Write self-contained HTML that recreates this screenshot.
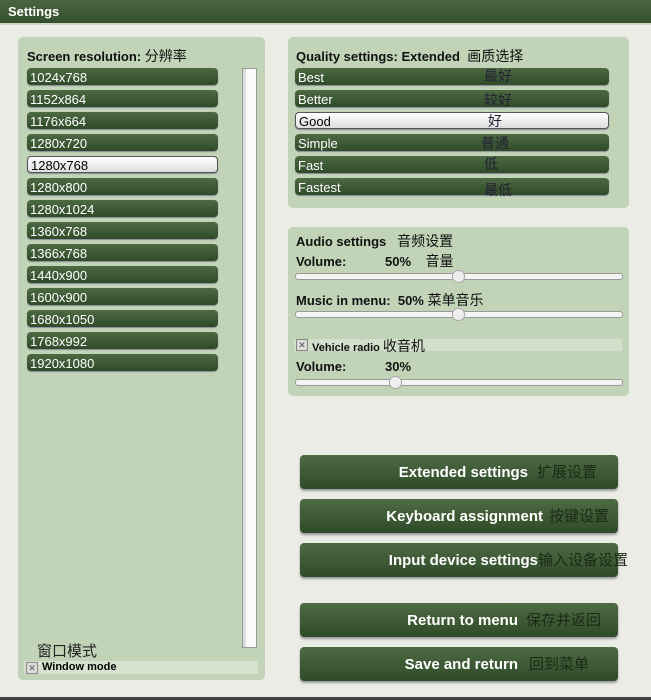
<!DOCTYPE html><html><head><style>
body{margin:0;width:651px;height:700px;overflow:hidden;background:#ecece6;font-family:"Liberation Sans","Noto Sans CJK SC",sans-serif;position:relative}
.a{position:absolute}
.title{left:0;top:0;width:651px;height:23px;background:linear-gradient(#4a6440,#34502c);color:#fff;font-weight:bold;font-size:13px;line-height:23px;text-indent:8px;border-bottom:2px solid #cfd6c8}
.panel{background:#c2d4b8;border-radius:5px}
.it{position:absolute;height:17px;border-radius:4px;background:linear-gradient(#4d6a43,#2f4a28);color:#fff;font-size:13px;line-height:19px;padding-left:3px;box-sizing:border-box;box-shadow:0 1px 1px #889}
.sel{background:linear-gradient(#fff,#ddd);color:#000;border:1px solid #555;line-height:17px}
.h{font-weight:bold;font-size:13px;color:#111;white-space:nowrap}
.cj{font-size:14px;color:#111;font-weight:normal}
.cn{position:absolute;font-size:14px;color:#223;line-height:16px}
.sl{position:absolute;height:5px;border:1px solid #999;background:#f4f4f4;border-radius:3px}
.kn{position:absolute;width:11px;height:11px;border-radius:6px;background:#eee;border:1px solid #aaa}
.btn{position:absolute;left:300px;width:318px;height:34px;border-radius:4px;background:linear-gradient(#4e6b44,#2f4a28);color:#fff;font-weight:bold;font-size:15px;line-height:35px;box-shadow:0 2px 2px #999}
.btn span{position:absolute;font-weight:normal;color:#1a2a15;font-size:15px}
.cb{position:absolute;width:10px;height:10px;background:#ddd;border:1px solid #888;font-size:9px;line-height:10px;text-align:center;color:#555}
</style></head><body>
<div class="a title">Settings</div>
<div class="a panel" style="left:18px;top:37px;width:247px;height:643px"></div>
<div class="a h" style="left:27px;top:46px">Screen resolution: <span class="cj">分辨率</span></div>
<div class="it" style="left:27px;top:68px;width:191px">1024x768</div>
<div class="it" style="left:27px;top:90px;width:191px">1152x864</div>
<div class="it" style="left:27px;top:112px;width:191px">1176x664</div>
<div class="it" style="left:27px;top:134px;width:191px">1280x720</div>
<div class="it sel" style="left:27px;top:156px;width:191px">1280x768</div>
<div class="it" style="left:27px;top:178px;width:191px">1280x800</div>
<div class="it" style="left:27px;top:200px;width:191px">1280x1024</div>
<div class="it" style="left:27px;top:222px;width:191px">1360x768</div>
<div class="it" style="left:27px;top:244px;width:191px">1366x768</div>
<div class="it" style="left:27px;top:266px;width:191px">1440x900</div>
<div class="it" style="left:27px;top:288px;width:191px">1600x900</div>
<div class="it" style="left:27px;top:310px;width:191px">1680x1050</div>
<div class="it" style="left:27px;top:332px;width:191px">1768x992</div>
<div class="it" style="left:27px;top:354px;width:191px">1920x1080</div>
<div class="a" style="left:242px;top:68px;width:13px;height:578px;background:#fafafa;border:1px solid #999;box-shadow:inset 3px 0 0 #ddd"></div>
<div class="a" style="left:37px;top:640px;font-size:15px;color:#222">窗口模式</div>
<div class="a" style="left:24px;top:661px;width:234px;height:13px;background:#d6e2cf"></div>
<div class="cb" style="left:26px;top:662px">✕</div>
<div class="a" style="left:42px;top:661px;font-size:11px;font-weight:bold;color:#000">Window mode</div>

<div class="a panel" style="left:288px;top:37px;width:341px;height:171px"></div>
<div class="a h" style="left:296px;top:46px">Quality settings: Extended &nbsp;<span class="cj">画质选择</span></div>
<div class="it" style="left:295px;top:68px;width:314px">Best</div>
<div class="it" style="left:295px;top:90px;width:314px">Better</div>
<div class="it sel" style="left:295px;top:112px;width:314px">Good</div>
<div class="it" style="left:295px;top:134px;width:314px">Simple</div>
<div class="it" style="left:295px;top:156px;width:314px">Fast</div>
<div class="it" style="left:295px;top:178px;width:314px">Fastest</div>
<div class="cn" style="left:484px;top:68px">最好</div>
<div class="cn" style="left:484px;top:92px">较好</div>
<div class="cn" style="left:488px;top:113px">好</div>
<div class="cn" style="left:481px;top:135px">普通</div>
<div class="cn" style="left:484px;top:156px">低</div>
<div class="cn" style="left:484px;top:182px">最低</div>

<div class="a panel" style="left:288px;top:227px;width:341px;height:169px"></div>
<div class="a h" style="left:296px;top:231px">Audio settings &nbsp;&nbsp;<span class="cj">音频设置</span></div>
<div class="a h" style="left:296px;top:251px"><span style="display:inline-block;width:89px">Volume:</span>50% &nbsp;&nbsp;&nbsp;<span class="cj">音量</span></div>
<div class="sl" style="left:295px;top:273px;width:326px"></div><div class="kn" style="left:452px;top:270px"></div>
<div class="a h" style="left:296px;top:290px">Music in menu: &nbsp;50% <span class="cj">菜单音乐</span></div>
<div class="sl" style="left:295px;top:311px;width:326px"></div><div class="kn" style="left:452px;top:308px"></div>
<div class="a" style="left:294px;top:339px;width:328px;height:12px;background:#d2dfca"></div>
<div class="cb" style="left:296px;top:339px">✕</div>
<div class="a" style="left:312px;top:336px;font-size:11px;font-weight:bold;color:#111">Vehicle radio <span style="font-size:14px;font-weight:normal">收音机</span></div>
<div class="a h" style="left:296px;top:359px"><span style="display:inline-block;width:89px">Volume:</span>30%</div>
<div class="sl" style="left:295px;top:379px;width:326px"></div><div class="kn" style="left:389px;top:376px"></div>

<div class="btn" style="top:455px"><span style="left:0;width:228px;text-align:right;color:#fff;font-weight:bold">Extended settings</span><span style="left:237px">扩展设置</span></div>
<div class="btn" style="top:499px"><span style="left:0;width:243px;text-align:right;color:#fff;font-weight:bold">Keyboard assignment</span><span style="left:249px">按键设置</span></div>
<div class="btn" style="top:543px"><span style="left:0;width:238px;text-align:right;color:#fff;font-weight:bold">Input device settings</span><span style="left:238px;white-space:nowrap">输入设备设置</span></div>
<div class="btn" style="top:603px"><span style="left:0;width:218px;text-align:right;color:#fff;font-weight:bold">Return to menu</span><span style="left:226px">保存并返回</span></div>
<div class="btn" style="top:647px"><span style="left:0;width:218px;text-align:right;color:#fff;font-weight:bold">Save and return</span><span style="left:229px">回到菜单</span></div>
<div class="a" style="left:0;top:697px;width:651px;height:3px;background:#444"></div>
</body></html>
